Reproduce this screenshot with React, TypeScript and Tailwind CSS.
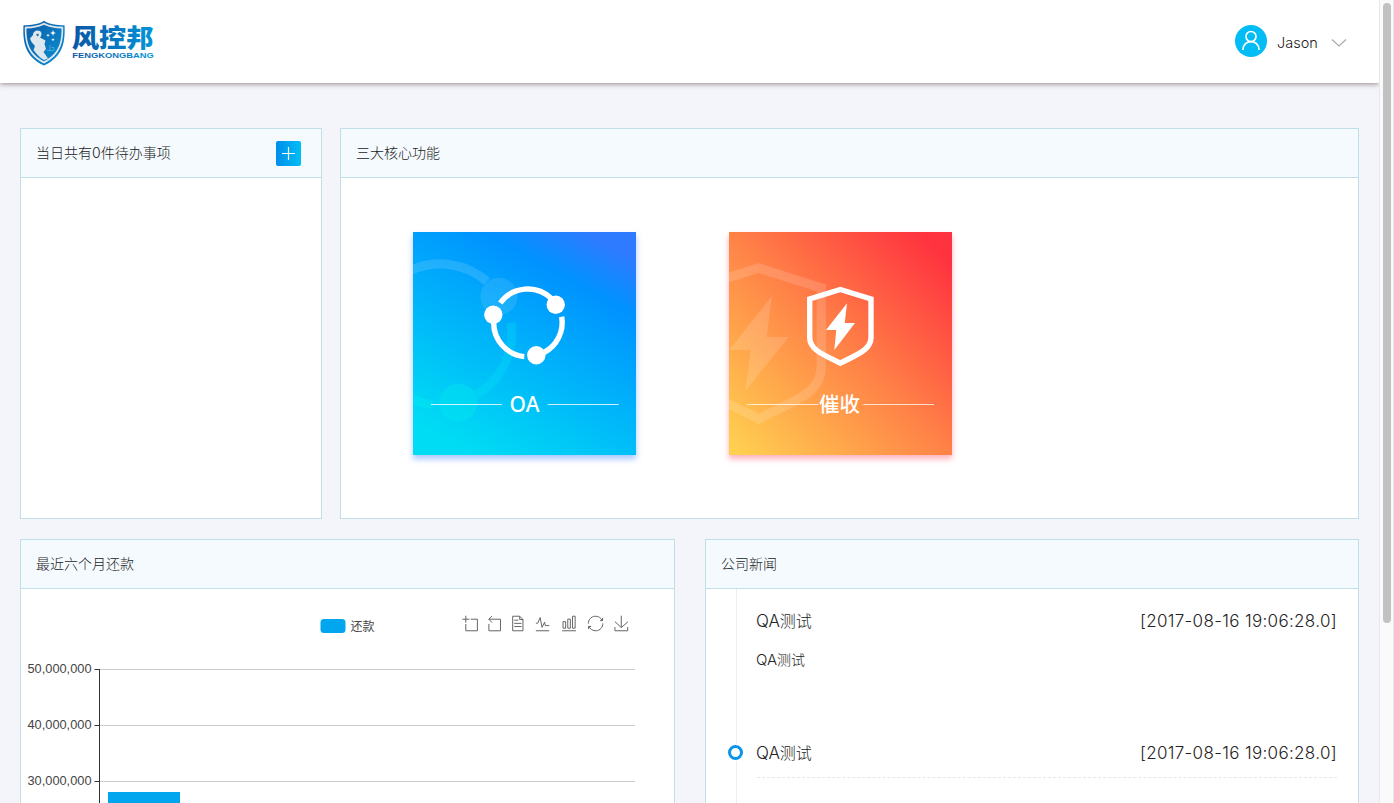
import React from 'react';

const latin = "font-['Inter','Noto_Sans_CJK_SC',sans-serif]";

function Logo() {
  return (
    <svg width="134" height="54" viewBox="0 -4 134 54" className="mt-[3px] block" role="img" aria-label="风控邦">
      <defs>
        <linearGradient id="word" gradientUnits="userSpaceOnUse" x1="50" y1="0" x2="132" y2="0">
          <stop offset="0" stopColor="#0a57a6" />
          <stop offset="1" stopColor="#0494d8" />
        </linearGradient>
        <linearGradient id="shield" x1="0" y1="0" x2="1" y2="1">
          <stop offset="0" stopColor="#0b5ea8" />
          <stop offset="1" stopColor="#0c8fd2" />
        </linearGradient>
      </defs>
      <path d="M22 .7C27 4.300 35 5 42.500 5.200C43.500 24 40 37 22 45.500C4 37 .5 24 1.500 5.200C9 5 17 4.300 22 .7Z" fill="url(#shield)" />
      <path d="M22 2.800C28 6 34 6.600 41.200 6.700C41.600 23 38 35.500 22 43.500C6 35.500 2.400 23 2.800 6.700C10 6.600 16 6 22 2.800Z" fill="#dfe7ee" />
      <path d="M22 4.700C28 7.500 33 8.300 39.500 8.400C39.700 23 36.500 33.500 22 41.300C7.500 33.500 4.300 23 4.500 8.400C11 8.300 16 7.500 22 4.700Z" fill="url(#shield)" />
      <path d="M11 15C11 11 15 9.500 18 11C20.500 13 19.500 16 18 17.500L23.500 20.500L22.500 24L24 29L21.500 32L24 35.500L26 38.500L22 40C18 38 14.500 34 11.500 30L13 26L9.500 22L8 18.500Z" fill="#dfe7ee" />
      <path d="M14 14.500l2-1 1 1.500-1.500 1.500z" fill="#1a6fb5" />
      <path d="M31 10l.8 2.200 2.200.8-2.200.8-.8 2.200-.8-2.200-2.200-.8 2.200-.8zM26 13.500l.5 1.300 1.300.5-1.300.5-.5 1.300-.5-1.300-1.300-.5 1.300-.5zM31 18l.5 1.300 1.300.5-1.300.5-.5 1.300-.5-1.300-1.300-.5 1.300-.5z" fill="#fff" />
      <path d="M28 25v6m-3-.5h7m-2.500-3h2.500v3" fill="none" stroke="#59b3df" strokeWidth=".7" />
      <text x="49.700" y="26.500" textLength="82" lengthAdjust="spacingAndGlyphs" fontSize="25" fontWeight="900" fill="url(#word)" className="font-['Noto_Sans_CJK_SC',sans-serif]">风控邦</text>
      <text x="50.300" y="38" textLength="81.500" lengthAdjust="spacingAndGlyphs" fontSize="7.500" fontWeight="700" fill="url(#word)" className="font-['Liberation_Sans',sans-serif]">FENGKONGBANG</text>
    </svg>
  );
}

function Panel({ title, action, className, children }: { title: string; action?: React.ReactNode; className: string; children?: React.ReactNode }) {
  return (
    <section className={`flex flex-col border border-[#c1dfe8] bg-white ${className}`}>
      <header className="flex h-[49px] shrink-0 items-center justify-between border-b border-[#c1dfe8] bg-[#f5fafe] pr-5 pl-[15px] text-sm text-[#222]">
        <h2 className="font-light">{title}</h2>
        {action}
      </header>
      {children}
    </section>
  );
}

function OaCard() {
  return (
    <a className="block h-[223px] w-[223px] bg-[linear-gradient(29deg,#00dcf4_10%,#0092ff_76%,#2f7bff_92%)] shadow-[0_4px_6px_rgba(60,130,255,0.45)]">
      <svg width="223" height="223" className="block">
        <g fill="none" strokeWidth="9" stroke="#fff" strokeOpacity=".13">
          <path d="M-2 38.200A71 71 0 0 1 74 49.500" />
          <path d="M98 90.800A71 71 0 0 1 62.500 163" stroke="#00e4f4" strokeOpacity=".3" />
          <path d="M19.700 172.600A71 71 0 0 1 -2 166.500" stroke="#00e8f2" strokeOpacity=".5" />
        </g>
        <circle cx="86" cy="64.300" r="18.500" fill="#fff" fillOpacity=".1" />
        <circle cx="45.300" cy="170.700" r="19" fill="#00e8f0" fillOpacity=".4" />
        <g fill="none" stroke="#fff" strokeWidth="5.400">
          <path d="M87.300 71A34 34 0 0 1 138.300 66.500" />
          <path d="M148.700 84.700A34 34 0 0 1 131 120.500" />
          <path d="M111.300 124.600A34 34 0 0 1 80.700 90" />
        </g>
        <g fill="#fff">
          <circle cx="142.700" cy="72.700" r="9.200" />
          <circle cx="80.300" cy="82.700" r="9.200" />
          <circle cx="123.300" cy="123.300" r="9.200" />
        </g>
        <path d="M18 172.500H89M134.700 172.500H205.700" stroke="#fff" strokeOpacity=".8" />
        <text x="111.500" y="180" textAnchor="middle" fontSize="21" fontWeight="500" fill="#fff" className="font-['Noto_Sans',sans-serif]">OA</text>
      </svg>
    </a>
  );
}

function CollectionCard() {
  return (
    <a className="block h-[223px] w-[223px] bg-[linear-gradient(45deg,#ffd050_2%,#ff8247_50%,#ff323f_93%)] shadow-[0_4px_6px_rgba(255,60,90,0.4)]">
      <svg width="223" height="223" className="block">
        <path d="M29.700 36L92.300 56V134C92.300 164 60 170 29.700 187C0 170 -33 164 -33 134V56Z" fill="none" stroke="#fff" strokeOpacity=".15" strokeWidth="9.300" />
        <path d="M43 63.700L37.700 105H59.700L16.300 159L21.700 118H.3Z" fill="#fff" fillOpacity=".15" />
        <path d="M111.300 57.500L142 67V105.500C142 118 128 122.500 111.300 131.200C94.500 122.500 80.700 118 80.700 105.500V67Z" fill="none" stroke="#fff" strokeWidth="5.400" />
        <path d="M118 71.300L115.700 91H126L105.300 118L107.300 98H97Z" fill="#fff" />
        <path d="M18 172.500H89.500M134.300 172.500H205" stroke="#fff" strokeOpacity=".75" />
        <text x="110.500" y="180" textAnchor="middle" fontSize="20.500" fontWeight="500" fill="#fff" className="font-['Noto_Sans_CJK_SC',sans-serif]">催收</text>
      </svg>
    </a>
  );
}

const tools = [
  { x: 441.3, d: 'M0,13.5h26.9 M13.5,26.9V0 M32.1,13.5H58V58H13.5 V32.1' },
  { x: 465.2, d: 'M22,1.4L9.9,13.5l12.3,12.3 M10.3,13.5H54.9v44.6 H10.3v-26' },
  { x: 488.7, d: 'M17.5,17.3H33 M45.4,29.5h-28 M11.5,2v56H51V14.8L38.4,2H11.5z M38.4,2.2v12.7H51 M45.4,41.7h-28' },
  { x: 513.8, d: 'M4.1,28.9h7.1l9.3-22l7.4,38l9.7-19.7l3,12.8h14.9M4.1,58h51.4' },
  { x: 540.3, d: 'M6.7,22.9h10V48h-10V22.9z M24.9,13h10v35h-10V13z M43.2,2h10v46h-10V2z M3.1,58h53.7' },
  { x: 566.8, d: 'M47,18.9h9.8V8.7 M56.3,20.1 C52.1,9,40.5,0.6,26.8,2.1C12.6,3.7,1.6,16.2,2.1,30.6 M13,41.1H3.1v10.2 M3.7,39.9c4.2,11.1,15.8,19.5,29.5,18 c14.2-1.6,25.2-14.1,24.7-28.5' },
  { x: 592.7, d: 'M4.7,22.9L29.3,45.5L54.7,23.4M4.6,43.6L4.6,58L53.8,58L53.8,43.6M29.2,45.1L29.2,0' },
];

const ticks = [
  { y: 80.5, label: '50,000,000' },
  { y: 136.5, label: '40,000,000' },
  { y: 192.5, label: '30,000,000' },
];

function RepaymentChart() {
  return (
    <svg width="653" height="214" className="block">
      <rect x="299.500" y="30" width="25" height="14" rx="3.500" fill="#02a6ee" />
      <text x="329.500" y="41.500" fontSize="12" fill="#444" className="font-['Noto_Sans_CJK_SC',sans-serif]">还款</text>
      {tools.map((t) => (
        <path key={t.x} d={t.d} transform={`translate(${t.x} 26.7) scale(0.2600)`} fill="none" stroke="#666" strokeWidth="1" vectorEffect="non-scaling-stroke" />
      ))}
      {ticks.map((t) => (
        <g key={t.label}>
          <path d={`M79 ${t.y}H614`} stroke="#ccc" />
          <path d={`M73.500 ${t.y}H79`} stroke="#333" />
          <text x="6.500" y={t.y + 3.7} textLength="64" lengthAdjust="spacingAndGlyphs" fontSize="12" fill="#444" className="font-['Liberation_Sans',sans-serif]">{t.label}</text>
        </g>
      ))}
      <path d="M78.500 80V214" stroke="#333" />
      <rect x="87" y="203" width="72" height="11" fill="#02a6ee" />
    </svg>
  );
}

function NewsHeading() {
  return (
    <div className="flex h-6 items-center justify-between text-base leading-6 font-light text-[#222]">
      <span className="-ml-px"><span className="text-[17px]">QA</span>测试</span>
      <time className="text-[17px] tracking-[0.33px]">[2017-08-16 19:06:28.0]</time>
    </div>
  );
}

export default function App() {
  return (
    <div className={`flex h-[803px] w-[1394px] overflow-hidden bg-[#f3f5fa] ${latin}`}>
      <div className="flex w-[1379px] flex-col">
        <header className="flex h-[83px] shrink-0 items-center justify-between bg-white pr-8 pl-[22px] shadow-[0_1px_5px_rgba(60,30,30,0.5)]">
          <Logo />
          <button className="mt-[3px] flex items-center text-[14.5px] font-light text-[#222]">
            <svg width="32" height="32" className="-mt-1 mr-2.5">
              <circle cx="16" cy="16" r="16" fill="#02bcf5" />
              <g fill="none" stroke="#fff" strokeWidth="1.700">
                <circle cx="16" cy="11.500" r="5" />
                <path d="M7.900 25C8 13.800 24 13.800 24.100 25" />
              </g>
            </svg>
            <span className="w-10">Jason</span>
            <svg width="16" height="10" className="ml-3.5">
              <path d="M1 1.500L8 8L15 1.500" fill="none" stroke="#aaa" strokeWidth="1.200" />
            </svg>
          </button>
        </header>

        <main className="flex flex-col gap-5 pt-[45px] pr-5 pl-5">
          <div className="flex gap-[18px]">
            <Panel
              title="当日共有0件待办事项"
              className="h-[391px] w-[302px]"
              action={
                <button className="flex h-[25px] w-[25px] items-center justify-center rounded-[2px] bg-linear-to-r from-[#008de9] to-[#00bff5]">
                  <svg width="13" height="13"><path d="M0 6.500H13M6.500 0V13" stroke="#fff" strokeWidth="1.200" /></svg>
                </button>
              }
            />
            <Panel title="三大核心功能" className="h-[391px] w-[1019px]">
              <div className="flex gap-[93px] pt-[54px] pl-[72px]">
                <OaCard />
                <CollectionCard />
              </div>
            </Panel>
          </div>

          <div className="flex gap-[30px]">
            <Panel title="最近六个月还款" className="h-[391px] w-[655px]">
              <RepaymentChart />
            </Panel>
            <Panel title="公司新闻" className="h-[391px] w-[654px]">
              <div className="flex flex-1">
                <div className="relative ml-[30px] w-px bg-[#eee]">
                  <span className="absolute top-[156px] -left-2 h-[15px] w-[15px] rounded-full border-[3px] border-[#0a95ea] bg-white ring-1 ring-white" />
                </div>
                <div className="ml-5 flex w-[580px] flex-col pt-5">
                  <NewsHeading />
                  <p className="mt-[17px] -ml-px h-5 text-sm leading-5 font-light text-[#222]"><span className="text-[15px]">QA</span>测试</p>
                  <div className="mt-[71px] border-b border-dashed border-[#e6e6e6] pb-3">
                    <NewsHeading />
                  </div>
                </div>
              </div>
            </Panel>
          </div>
        </main>
      </div>

      <div className="flex w-[15px] justify-center border-x border-[#e8e8e8] bg-[#fafafa] pt-[3px]">
        <div className="h-[620px] w-2 rounded-full bg-[#c1c1c1]" />
      </div>
    </div>
  );
}
